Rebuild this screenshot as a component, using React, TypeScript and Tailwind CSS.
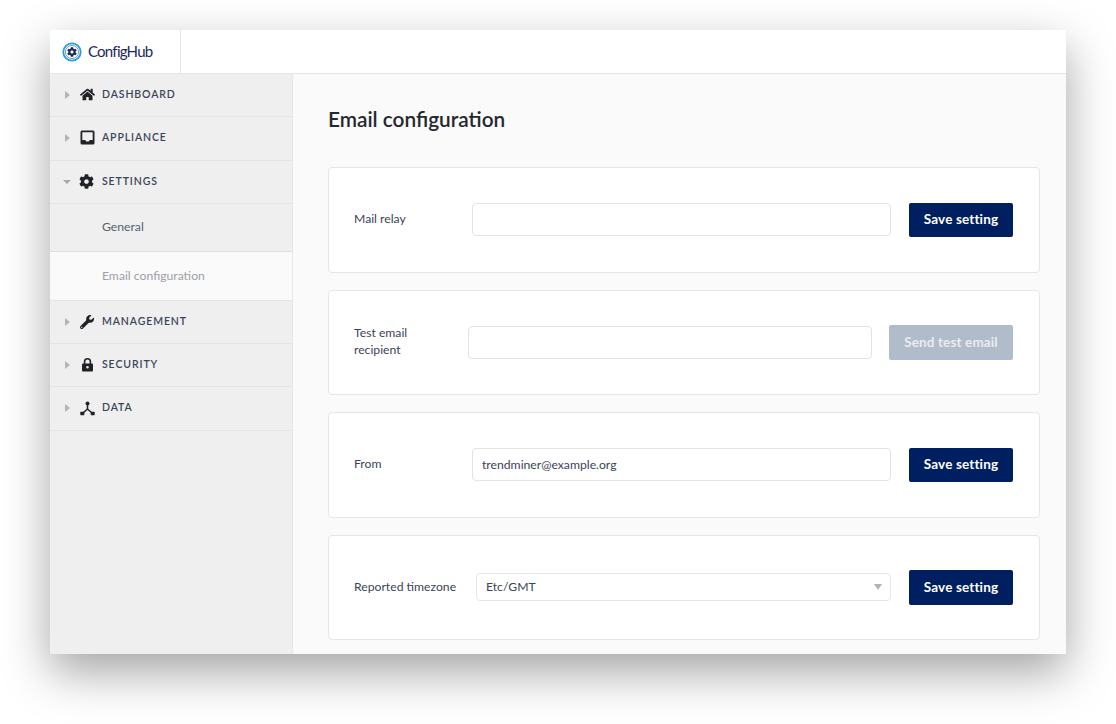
import React from "react";
import { FaHome, FaCog, FaWrench } from "react-icons/fa";

const lato = "font-['Lato','Liberation_Sans',sans-serif]";

function Inbox() {
  return (
    <svg width="15" height="15" viewBox="0 0 15 15">
      <path fillRule="evenodd" fill="#202227" d="M2 .5h11A1.5 1.5 0 0 1 14.500 2v11a1.500 1.500 0 0 1-1.500 1.500H2A1.500 1.500 0 0 1 .5 13V2A1.500 1.500 0 0 1 2 .5ZM2.300 2.300v7.600h2.900l1 1.500h2.600l1-1.500h2.900V2.300Z" />
    </svg>
  );
}

function LockIcon() {
  return (
    <svg width="15" height="15" viewBox="0 0 15 15">
      <path d="M4.600 7V4.600a2.900 2.900 0 0 1 5.800 0V7" fill="none" stroke="#202227" strokeWidth="1.600" />
      <path fillRule="evenodd" fill="#202227" d="M3 6.500h9a1 1 0 0 1 1 1v6a1 1 0 0 1-1 1H3a1 1 0 0 1-1-1v-6a1 1 0 0 1 1-1ZM7.500 9a1.300 1.300 0 1 0 0 2.600a1.300 1.300 0 1 0 0-2.600Z" />
    </svg>
  );
}

function DataIcon() {
  return (
    <svg width="15" height="15" viewBox="0 0 15 15">
      <circle cx="7.500" cy="2.500" r="2" fill="#202227" />
      <rect x="0.300" y="10.800" width="4" height="3.400" rx="0.600" fill="#202227" />
      <rect x="10.700" y="10.800" width="4" height="3.400" rx="0.600" fill="#202227" />
      <path d="M7.500 3v5M7.500 8L3 12M7.500 8l4.500 4" stroke="#202227" strokeWidth="1.500" fill="none" />
    </svg>
  );
}

function Logo() {
  return (
    <svg width="20" height="20" viewBox="0 0 20 20">
      <circle cx="10" cy="10" r="8.700" fill="none" stroke="#1f9fe0" strokeWidth="1.800" />
      <circle cx="10" cy="10" r="6.600" fill="none" stroke="#1b2a5c" strokeWidth="0.500" />
      <g transform="translate(5 5) scale(0.0195)">
        <path fill="#1b2a5c" d="M487.400 315.700l-42.600-24.600c4.300-23.200 4.300-47 0-70.200l42.600-24.600c4.900-2.800 7.100-8.600 5.500-14-11.100-35.600-30-67.800-54.700-94.600-3.800-4.100-10-5.100-14.800-2.300L380.800 110c-17.900-15.400-38.500-27.300-60.800-35.100V25.800c0-5.600-3.900-10.500-9.400-11.700-36.700-8.200-74.300-7.800-109.200 0-5.500 1.200-9.400 6.100-9.400 11.700V75c-22.200 7.900-42.800 19.800-60.800 35.100L88.700 85.500c-4.900-2.800-11-1.900-14.800 2.300-24.700 26.700-43.600 58.900-54.700 94.600-1.700 5.400.6 11.200 5.500 14L67.300 221c-4.300 23.200-4.300 47 0 70.200l-42.600 24.600c-4.900 2.800-7.100 8.600-5.500 14 11.100 35.600 30 67.800 54.700 94.600 3.800 4.100 10 5.100 14.800 2.300l42.600-24.600c17.900 15.400 38.500 27.300 60.800 35.100v49.200c0 5.600 3.900 10.500 9.400 11.700 36.700 8.200 74.300 7.800 109.200 0 5.500-1.200 9.400-6.100 9.400-11.700v-49.200c22.200-7.900 42.800-19.800 60.800-35.100l42.600 24.600c4.900 2.800 11 1.900 14.800-2.300 24.700-26.700 43.600-58.900 54.700-94.600 1.500-5.500-.7-11.300-5.600-14.100zM256 336c-44.100 0-80-35.900-80-80s35.900-80 80-80 80 35.900 80 80-35.900 80-80 80z" />
      </g>
    </svg>
  );
}

function Caret({ open }: { open?: boolean }) {
  return open ? (
    <span className="w-0 h-0 ml-[-2px] mr-[8px] border-x-[4px] border-x-transparent border-t-[4px] border-t-[#a9a9a9]" />
  ) : (
    <span className="w-0 h-0 mr-[10px] border-y-[4px] border-y-transparent border-l-[5px] border-l-[#b5b5b5]" />
  );
}

function NavRow({ label, icon, open, h }: { label: string; icon: React.ReactNode; open?: boolean; h: string }) {
  return (
    <div className={`${h} flex items-center pl-[15px] border-b border-[#e4e4e4]`}>
      <Caret open={open} />
      <span className={`${open ? "w-[23px]" : "w-[22px]"} flex items-center text-[#202227] text-[15px]`}>{icon}</span>
      <span className="text-[10.5px] font-semibold tracking-[0.085em] text-[#3b4457] uppercase">{label}</span>
    </div>
  );
}

function Field({ label, labelClass, value, btn, disabled, select, gap }: { label: React.ReactNode; labelClass: string; value?: string; btn: string; disabled?: boolean; select?: boolean; gap: string }) {
  return (
    <div className="h-[105.5px] shrink-0 bg-white border border-[#e6e6e6] rounded-[4px] flex items-center pl-[25px] pr-[26px]">
      <div className={`${labelClass} pb-[2px] text-[12.2px] leading-[17px] text-[#3b4457] shrink-0`}>{label}</div>
      {select ? (
        <div className="flex-1 h-[28px] bg-white border border-[#e6e6e6] rounded-[4px] flex items-center justify-between pl-[9px] pr-[8px] text-[12.2px] text-[#3b4457]">
          <span>{value}</span>
          <span className="w-0 h-0 border-x-[4px] border-x-transparent border-t-[6px] border-t-[#b3b3b3]" />
        </div>
      ) : (
        <div className="flex-1 h-[33px] bg-white border border-[#e3e3e3] rounded-[4px] flex items-center pl-[9px] text-[12.2px] text-[#3b4457]">
          {value}
        </div>
      )}
      <button className={`${gap} ${disabled ? "w-[124px] h-[35px] bg-[#b1bccb] text-[#e9ecf1]" : "w-[104px] h-[34.500px] bg-[#001f60] text-white"} shrink-0 rounded-[2px] pb-[1px] text-[13.5px] font-bold tracking-[0.01em]`}>
        {btn}
      </button>
    </div>
  );
}

export default function App() {
  return (
    <div className={`${lato} w-[1116px] h-[724px] bg-white pt-[30px] pl-[50px] overflow-hidden`}>
      <div className="w-[1016px] h-[624px] bg-[#fafafa] shadow-[0_18px_44px_rgba(0,0,0,0.36)] flex flex-col overflow-hidden">
        <header className="h-[44px] shrink-0 bg-white border-b border-[#e6e6e6] flex">
          <div className="w-[131px] border-r border-[#e6e6e6] flex items-center pl-[12px] gap-[6px]">
            <Logo />
            <span className="text-[15px] tracking-[-0.05em] text-[#1b2a5c]">ConfigHub</span>
          </div>
        </header>
        <div className="flex flex-1 min-h-0">
          <aside className="w-[243px] shrink-0 bg-[#efefef] border-r border-[#e8e8e8] flex flex-col">
            <NavRow h="h-[43px] pb-[1px]" label="Dashboard" icon={<FaHome size={15} />} />
            <NavRow h="h-[44px] pb-[2px]" label="Appliance" icon={<Inbox />} />
            <NavRow h="h-[43px] pb-[1px]" open label="Settings" icon={<FaCog size={15} />} />
            <div className="h-[48px] border-b border-[#dedede] flex items-center pl-[52px] text-[12.2px] text-[#59606e]">General</div>
            <div className="h-[49px] bg-[#fafafa] border-b border-[#e4e4e4] flex items-center pl-[52px] text-[12.2px] text-[#9b9fa6]">Email configuration</div>
            <NavRow h="h-[43px]" label="Management" icon={<FaWrench size={14} />} />
            <NavRow h="h-[43px] pb-[1px]" label="Security" icon={<LockIcon />} />
            <NavRow h="h-[44px] pb-[1px]" label="Data" icon={<DataIcon />} />
          </aside>
          <main className="flex-1 min-w-0 pl-[35px] pr-[26px] flex flex-col gap-[17px]">
            <h1 className="h-[76px] shrink-0 flex items-center pt-[14px] text-[20.8px] font-semibold leading-none text-[#25282e]">Email configuration</h1>
            <Field label="Mail relay" labelClass="w-[118px]" btn="Save setting" gap="ml-[18px]" />
            <Field label={<>Test email<br />recipient</>} labelClass="w-[114px]" btn="Send test email" disabled gap="ml-[17px]" />
            <Field label="From" labelClass="w-[118px]" value="trendminer@example.org" btn="Save setting" gap="ml-[18px]" />
            <Field label="Reported timezone" labelClass="w-[122px]" value="Etc/GMT" select btn="Save setting" gap="ml-[18px]" />
          </main>
        </div>
      </div>
    </div>
  );
}
